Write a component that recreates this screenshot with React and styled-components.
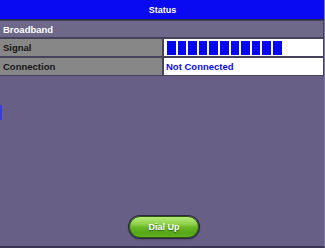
import React from "react";
import styled, { createGlobalStyle } from "styled-components";

const GlobalStyle = createGlobalStyle`
  html, body {
    margin: 0;
    padding: 0;
    background: #665f85;
  }
  body {
    font-family: "Liberation Sans", Arial, sans-serif;
  }
`;

const Screen = styled.div`
  position: relative;
  width: 325px;
  height: 248px;
  box-sizing: border-box;
  background: #675f86;
  border-bottom: 2px solid #3b3654;
  border-right: 1px solid #7d76a0;
  display: flex;
  flex-direction: column;
  overflow: hidden;
`;

const Header = styled.div`
  height: 19px;
  flex: none;
  background: #0a0af2;
  border-bottom: 1px solid #2c2947;
  color: #ffffff;
  font-weight: 700;
  font-size: 9px;
  display: flex;
  align-items: center;
  justify-content: center;
  padding-left: 1px;
`;

const Table = styled.div`
  flex: none;
  display: grid;
  grid-template-columns: 162px 1fr;
  grid-template-rows: 16px 17px 17px;
  column-gap: 1px;
  row-gap: 2px;
  padding: 1px 1px 1px 0;
  background: #47425c;
`;

const Cell = styled.div`
  display: flex;
  align-items: center;
  font-size: 9.5px;
  font-weight: 700;
  white-space: nowrap;
  box-sizing: border-box;
`;

const SectionCell = styled(Cell)`
  grid-column: 1 / span 2;
  background: #6e6889;
  color: #ffffff;
  padding-left: 3px;
`;

const LabelCell = styled(Cell)`
  background: #878787;
  color: #161616;
  padding-left: 3px;
`;

const ValueCell = styled(Cell)`
  background: #ffffff;
  color: #0b0bea;
  padding-left: 2px;
  margin-left: 1px;
`;

const Bars = styled.div`
  display: flex;
  gap: 2px;
  padding-left: 1px;
`;

const Bar = styled.span`
  display: block;
  width: 8.6px;
  height: 14px;
  background: #0505f5;
`;

const SideMark = styled.div`
  position: absolute;
  left: 0;
  top: 105px;
  width: 2px;
  height: 15px;
  background: #3c3ae0;
`;

const Footer = styled.div`
  margin-top: auto;
  display: flex;
  justify-content: center;
  padding: 0 0 8px 4px;
`;

const DialButton = styled.button`
  width: 70px;
  height: 22px;
  border-radius: 11px;
  border: 1px solid #2e5412;
  box-shadow: 0 0 0 1px #2d2946, 0 1px 2px rgba(0, 0, 0, 0.45);
  background: linear-gradient(
    to bottom,
    #b3ec78 0%,
    #8fd24c 35%,
    #68b826 52%,
    #55a518 80%,
    #62b422 100%
  );
  color: #ffffff;
  font-family: "Liberation Sans", Arial, sans-serif;
  font-weight: 700;
  font-size: 9px;
  text-shadow: 0 1px 1px rgba(30, 60, 10, 0.7);
  padding: 0;
  cursor: pointer;
`;

const SIGNAL_LEVEL = 11;

export default function App() {
  return (
    <>
      <GlobalStyle />
      <Screen>
        <Header>Status</Header>
        <Table>
          <SectionCell>Broadband</SectionCell>
          <LabelCell>Signal</LabelCell>
          <ValueCell>
            <Bars>
              {Array.from({ length: SIGNAL_LEVEL }, (_, i) => (
                <Bar key={i} />
              ))}
            </Bars>
          </ValueCell>
          <LabelCell>Connection</LabelCell>
          <ValueCell>Not Connected</ValueCell>
        </Table>
        <SideMark />
        <Footer>
          <DialButton type="button">Dial Up</DialButton>
        </Footer>
      </Screen>
    </>
  );
}
